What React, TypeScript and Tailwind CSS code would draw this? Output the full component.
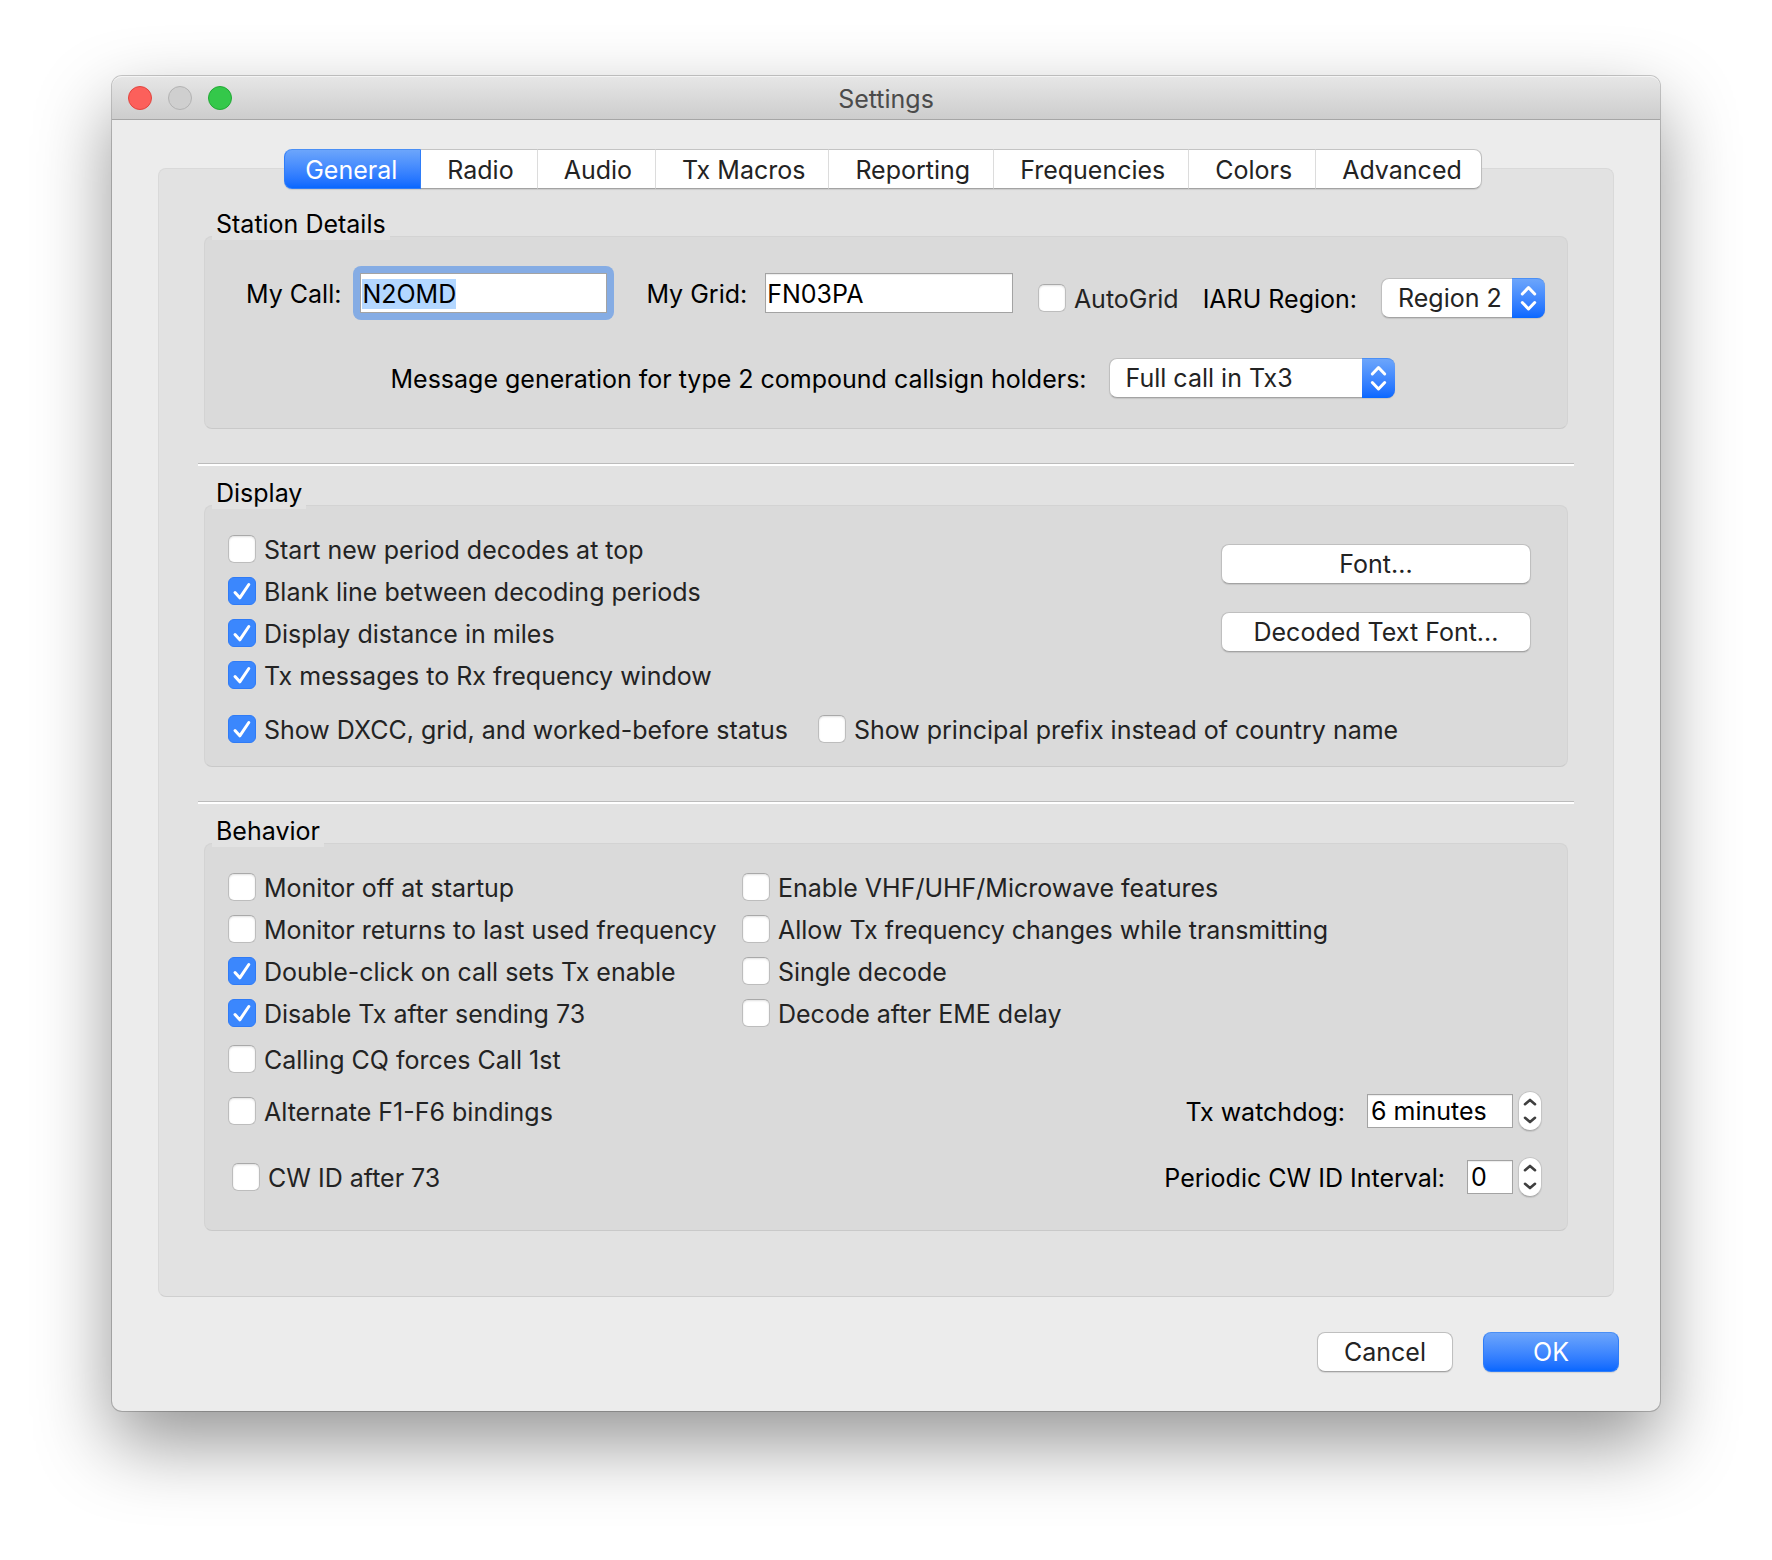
import { useEffect, useId, useRef, useState } from "react";
import type { ReactNode } from "react";

const TABS = ["General", "Radio", "Audio", "Tx Macros", "Reporting", "Frequencies", "Colors", "Advanced"];

function Check({ label, on = false }: { label: string; on?: boolean }) {
  const [checked, setChecked] = useState(on);
  return (
    <label className="flex h-7 w-fit items-center gap-2 whitespace-nowrap text-[#232323]">
      <span className="grid size-7 shrink-0">
        <input
          type="checkbox"
          checked={checked}
          onChange={(e) => setChecked(e.target.checked)}
          className="col-start-1 row-start-1 size-7 appearance-none rounded-md border border-[#bdbdbd] border-t-[#a9a9a9] bg-white shadow-[inset_0_1px_2px_rgba(0,0,0,0.12)] outline-none checked:border-[#2f7bf6] checked:bg-[#3b87fd] checked:shadow-none"
        />
        {checked && (
          <svg viewBox="0 0 28 28" className="pointer-events-none col-start-1 row-start-1 size-7" fill="none" aria-hidden="true">
            <path d="M7 15.5 L11.8 20.8 L20.8 7.5" stroke="white" strokeWidth="3" strokeLinecap="round" strokeLinejoin="round" />
          </svg>
        )}
      </span>
      <span className="pt-0.5">{label}</span>
    </label>
  );
}

function Select({ id, options, className }: { id: string; options: string[]; className: string }) {
  return (
    <span className={`grid h-10 shrink-0 ${className}`}>
      <select
        id={id}
        className="col-start-1 row-start-1 h-10 w-full appearance-none rounded-lg border border-[#bfbfbf] border-b-[#a3a3a3] bg-white pr-9 pl-4 text-[#232323] shadow-[0_1px_1px_rgba(0,0,0,0.1)] outline-none"
      >
        {options.map((o) => (
          <option key={o}>{o}</option>
        ))}
      </select>
      <span className="pointer-events-none col-start-1 row-start-1 h-10 w-[33px] justify-self-end rounded-r-lg border-t border-[#4a8ff5] bg-linear-to-b from-[#6ca5fb] to-[#0667ff]">
        <svg viewBox="0 0 33 39" className="h-full w-full" fill="none" aria-hidden="true">
          <path d="M10.3 15 L16.5 8.5 L22.7 15 M10.3 23.5 L16.5 30 L22.7 23.5" stroke="white" strokeWidth="3" strokeLinecap="round" strokeLinejoin="round" />
        </svg>
      </span>
    </span>
  );
}

function Spin({ id, label, value, className }: { id: string; label: string; value: string; className: string }) {
  return (
    <div className="flex h-10 items-center">
      <label htmlFor={id} className="mr-[22px] pt-0.5 whitespace-nowrap">
        {label}
      </label>
      <input
        id={id}
        defaultValue={value}
        className={`h-[34px] border border-[#a3a3a3] bg-white pl-[3px] shadow-[inset_0_1px_1px_rgba(0,0,0,0.08)] outline-none ${className}`}
      />
      <span className="ml-[5px] flex h-10 w-6 flex-col rounded-full border border-[#c4c4c4] border-b-[#ababab] bg-white text-[#3f3f3f] shadow-[0_1px_1px_rgba(0,0,0,0.1)]">
        <button type="button" aria-label={`Increase ${label}`} className="flex flex-1 items-end justify-center pb-[5px]">
          <svg width="14" height="8" viewBox="0 0 14 8" fill="none" aria-hidden="true">
            <path d="M2 6.2 L7 1.9 L12 6.2" stroke="currentColor" strokeWidth="2.6" strokeLinecap="round" strokeLinejoin="round" />
          </svg>
        </button>
        <button type="button" aria-label={`Decrease ${label}`} className="flex flex-1 items-start justify-center pt-[5px]">
          <svg width="14" height="8" viewBox="0 0 14 8" fill="none" aria-hidden="true">
            <path d="M2 1.8 L7 6.1 L12 1.8" stroke="currentColor" strokeWidth="2.6" strokeLinecap="round" strokeLinejoin="round" />
          </svg>
        </button>
      </span>
    </div>
  );
}

function Group({ title, className, children }: { title: string; className: string; children: ReactNode }) {
  const id = useId();
  return (
    <section aria-labelledby={id} className="px-1.5">
      <h2 id={id} className="relative z-10 -mb-1 ml-2 w-fit bg-[#e2e2e2] px-1 leading-[31px]">
        {title}
      </h2>
      <div className={`rounded-lg border border-[#d3d3d3] border-b-[#c9c9c9] bg-[#dadada] ${className}`}>{children}</div>
    </section>
  );
}

function Rule() {
  return <hr className="mt-[34px] mb-3 h-[3px] border-0 border-t border-[#bcbcbc] bg-white" />;
}

function PushButton({ children }: { children: ReactNode }) {
  return (
    <button
      type="button"
      className="h-10 rounded-lg border border-[#bfbfbf] border-b-[#a3a3a3] bg-white text-[#232323] shadow-[0_1px_1px_rgba(0,0,0,0.1)]"
    >
      {children}
    </button>
  );
}

export default function App() {
  const [tab, setTab] = useState("General");
  const callRef = useRef<HTMLInputElement>(null);

  useEffect(() => {
    callRef.current?.focus();
    callRef.current?.select();
  }, []);

  return (
    <main className="bg-white px-28 pt-[76px] pb-[148px] font-['Inter',sans-serif] text-[25px] leading-8 text-black">
      <div className="rounded-[10px] bg-[#ececec] shadow-[0_0_0_1px_rgba(0,0,0,0.2),0_32px_76px_rgba(0,0,0,0.42)]">
        <header className="grid h-11 grid-cols-[1fr_auto_1fr] items-center rounded-t-[10px] border-t border-b border-t-[#f4f4f4] border-b-[#a6a6a6] bg-linear-to-b from-[#e6e6e6] to-[#cdcdcd] px-4">
          <div className="flex gap-4">
            <button type="button" aria-label="Close" className="size-6 rounded-full border border-[#e2453f] bg-[#fc605b]" />
            <button type="button" aria-label="Minimize" disabled className="size-6 rounded-full border border-[#b3b3b3] bg-[#cfcfcf]" />
            <button type="button" aria-label="Zoom" className="size-6 rounded-full border border-[#22a935] bg-[#34c84a]" />
          </div>
          <h1 className="pt-0.5 text-[#4b4b4b]">Settings</h1>
        </header>

        <div className="px-[46px] pt-[29px]">
          <div className="relative z-10 -mb-[21px] flex justify-center pr-1.5">
            <div role="tablist" className="flex h-10 rounded-lg shadow-[0_1px_1px_rgba(0,0,0,0.1)]">
              {TABS.map((t) => (
                <button
                  key={t}
                  type="button"
                  role="tab"
                  aria-selected={t === tab}
                  onClick={() => setTab(t)}
                  className="border-y border-r border-t-[#c4c4c4] border-r-[#dcdcdc] border-b-[#a3a3a3] bg-white pt-0.5 pr-[23px] pl-[26px] whitespace-nowrap text-[#232323] first:rounded-l-lg first:border-l first:pl-5 last:rounded-r-lg last:border-r-[#bdbdbd] last:pr-[19px] aria-selected:border-[#2f7df8] aria-selected:border-t-[#4a8ff5] aria-selected:bg-linear-to-b aria-selected:from-[#6ca5fb] aria-selected:to-[#0667ff] aria-selected:text-white"
                >
                  {t}
                </button>
              ))}
            </div>
          </div>

          <div role="tabpanel" aria-label={tab} className="rounded-lg border border-[#d9d9d9] border-b-[#cfcfcf] bg-[#e2e2e2] px-[39px] pt-10 pb-[65px]">
            <Group title="Station Details" className="pt-9 pr-[22px] pb-[30px] pl-[41px]">
              <div className="flex justify-between">
                <div className="flex items-center pb-[5px]">
                  <label htmlFor="my-call" className="mr-3 pt-0.5 whitespace-nowrap">
                    My Call:
                  </label>
                  <span className="-my-2 flex rounded-lg p-[7px] focus-within:bg-[#85ace4]">
                    <input
                      id="my-call"
                      ref={callRef}
                      defaultValue="N2OMD"
                      className="h-10 w-[247px] border border-[#a3a3a3] bg-white pt-0.5 pl-px outline-none selection:bg-[#b3d7ff] selection:text-black"
                    />
                  </span>
                  <label htmlFor="my-grid" className="mr-[18px] ml-8 pt-0.5 whitespace-nowrap">
                    My Grid:
                  </label>
                  <input
                    id="my-grid"
                    defaultValue="FN03PA"
                    className="h-10 w-[248px] border border-[#a3a3a3] bg-white pt-0.5 pl-px shadow-[inset_0_1px_1px_rgba(0,0,0,0.08)] outline-none"
                  />
                </div>
                <div className="flex items-center pt-[5px]">
                  <Check label="AutoGrid" />
                  <label htmlFor="iaru" className="mx-6 pt-0.5 whitespace-nowrap">
                    IARU Region:
                  </label>
                  <Select id="iaru" className="w-[164px]" options={["Region 2", "Region 1", "Region 3"]} />
                </div>
              </div>
              <div className="mt-10 flex items-center justify-center pr-1.5">
                <label htmlFor="msg-gen" className="mr-[22px] pt-0.5 whitespace-nowrap">
                  Message generation for type 2 compound callsign holders:
                </label>
                <Select id="msg-gen" className="w-[286px]" options={["Full call in Tx3", "Full call in Tx1", "Full call in Tx5"]} />
              </div>
            </Group>

            <Rule />

            <Group title="Display" className="pt-[29px] pr-9 pb-[23px] pl-[23px]">
              <div className="flex justify-between">
                <div className="flex flex-col gap-3.5">
                  <Check label="Start new period decodes at top" />
                  <Check label="Blank line between decoding periods" on />
                  <Check label="Display distance in miles" on />
                  <Check label="Tx messages to Rx frequency window" on />
                </div>
                <div className="flex w-[310px] flex-col gap-7 pt-[9px]">
                  <PushButton>Font...</PushButton>
                  <PushButton>Decoded Text Font...</PushButton>
                </div>
              </div>
              <div className="mt-[26px] flex gap-[30px]">
                <Check label="Show DXCC, grid, and worked-before status" on />
                <Check label="Show principal prefix instead of country name" />
              </div>
            </Group>

            <Rule />

            <Group title="Behavior" className="pt-[29px] pr-[25px] pb-[33px] pl-[23px]">
              <div className="grid grid-cols-[514px_1fr] gap-y-3.5">
                <Check label="Monitor off at startup" />
                <Check label="Enable VHF/UHF/Microwave features" />
                <Check label="Monitor returns to last used frequency" />
                <Check label="Allow Tx frequency changes while transmitting" />
                <Check label="Double-click on call sets Tx enable" on />
                <Check label="Single decode" />
                <Check label="Disable Tx after sending 73" on />
                <Check label="Decode after EME delay" />
              </div>
              <div className="mt-[18px]">
                <Check label="Calling CQ forces Call 1st" />
              </div>
              <div className="mt-[18px] flex items-center justify-between">
                <Check label="Alternate F1-F6 bindings" />
                <Spin id="watchdog" label="Tx watchdog:" value="6 minutes" className="w-[146px]" />
              </div>
              <div className="mt-[26px] flex items-center justify-between pl-1">
                <Check label="CW ID after 73" />
                <Spin id="cw-interval" label="Periodic CW ID Interval:" value="0" className="w-[46px]" />
              </div>
            </Group>
          </div>
        </div>

        <footer className="flex justify-end gap-[30px] pt-[35px] pr-[41px] pb-[39px]">
          <div className="flex w-[136px] flex-col">
            <PushButton>Cancel</PushButton>
          </div>
          <button
            type="button"
            className="h-10 w-[136px] rounded-lg border border-[#2f7df8] border-t-[#4a8ff5] bg-linear-to-b from-[#6ca5fb] to-[#0667ff] text-white shadow-[0_1px_1px_rgba(0,0,0,0.1)]"
          >
            OK
          </button>
        </footer>
      </div>
    </main>
  );
}
